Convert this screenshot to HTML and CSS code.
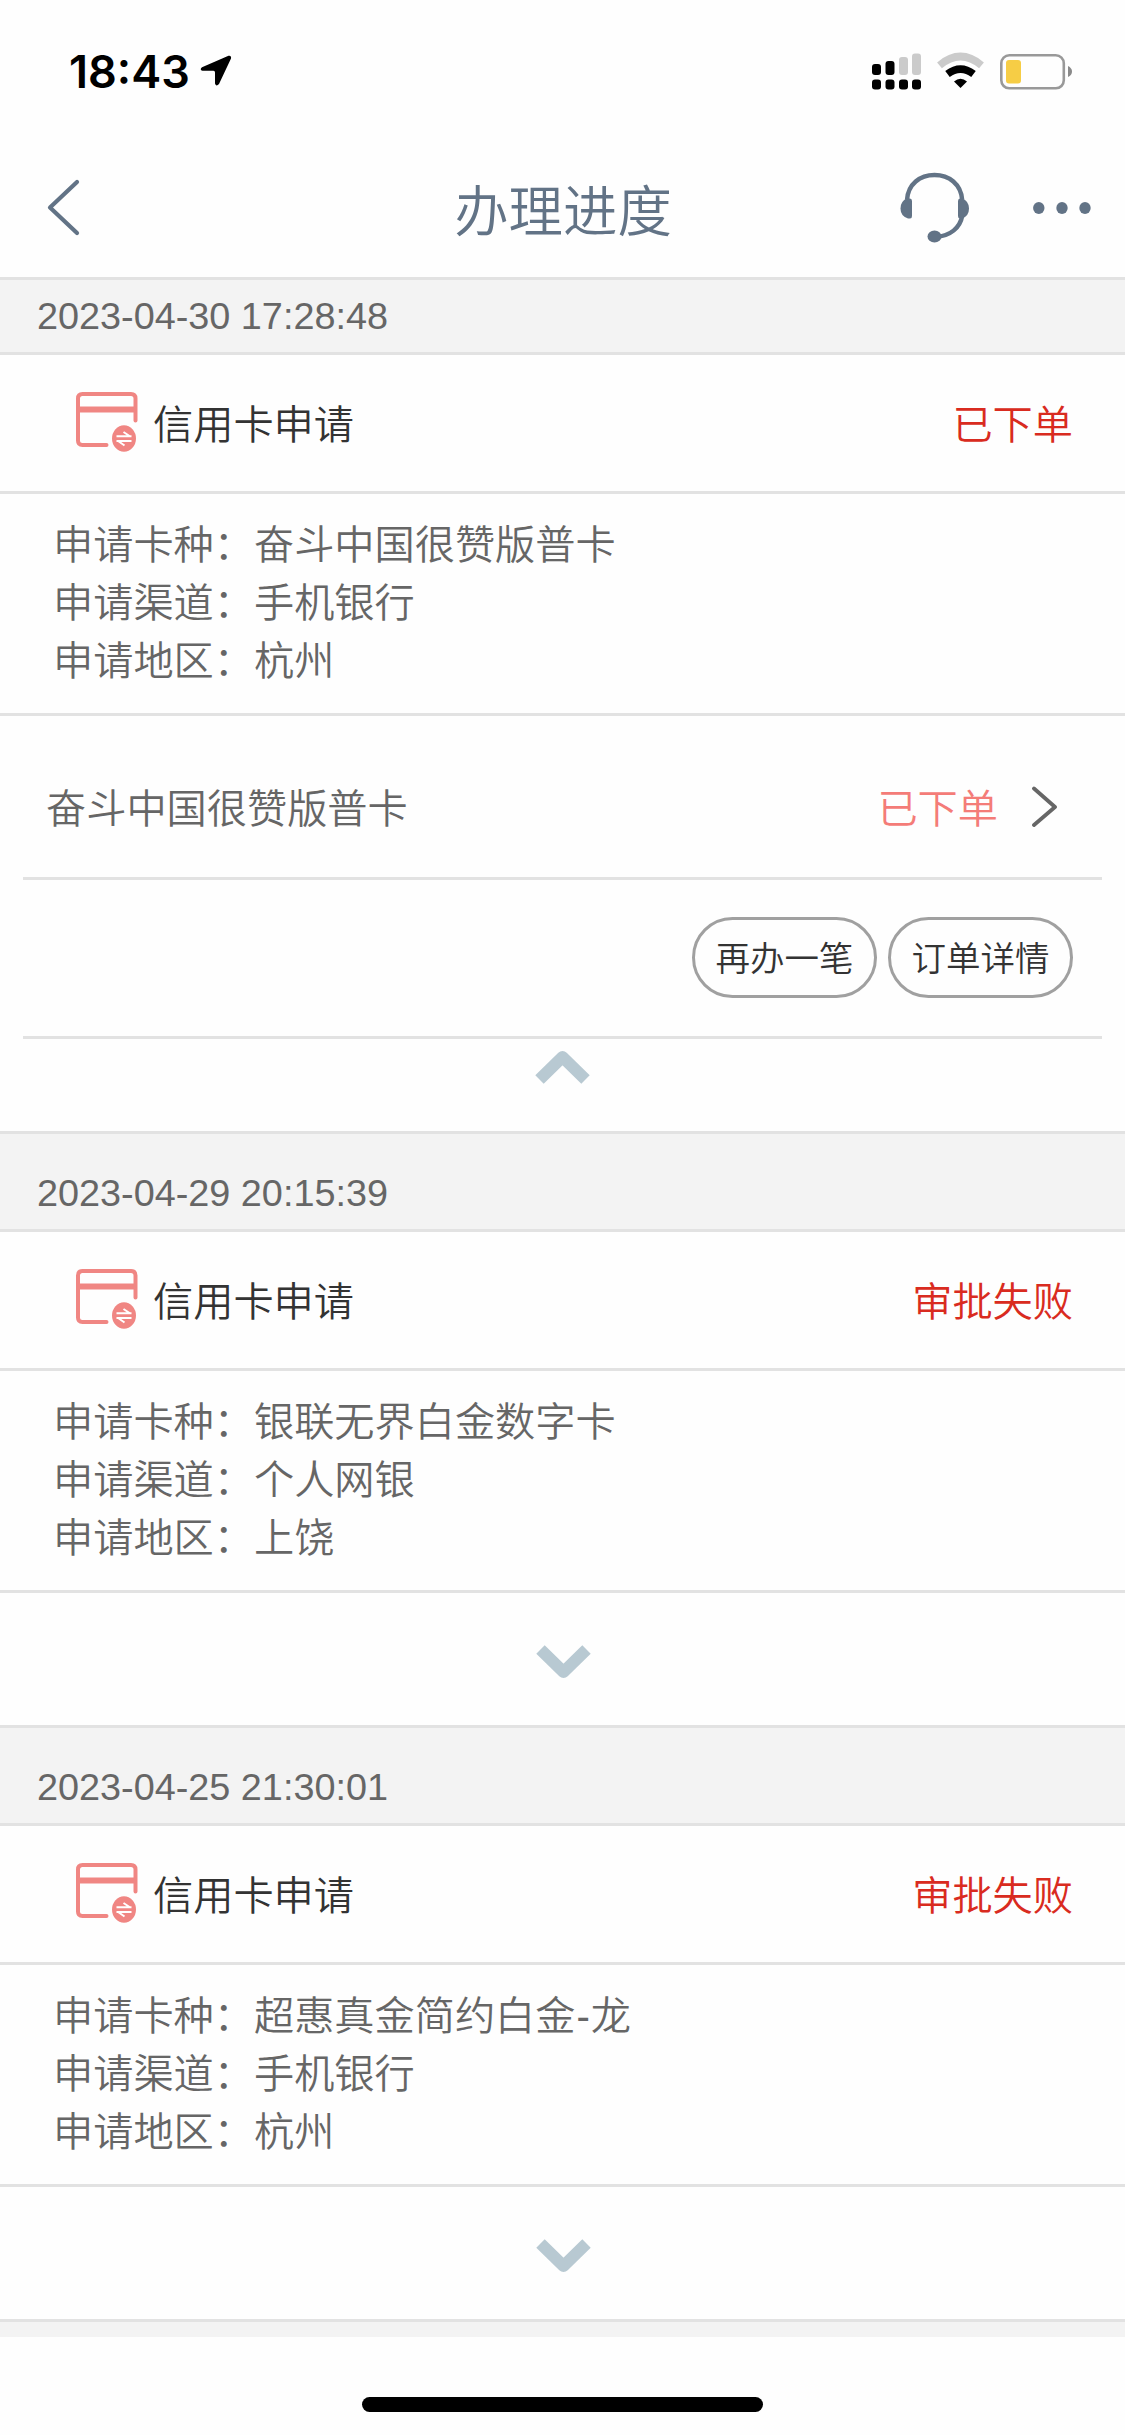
FILE: index.html
```html
<!DOCTYPE html>
<html lang="zh-CN">
<head>
<meta charset="utf-8">
<title>办理进度</title>
<link rel="stylesheet" href="styles.css">
</head>
<body>
<svg class="defs" width="0" height="0" aria-hidden="true">
  <symbol id="card" viewBox="0 0 64 64">
    <g fill="none" stroke="#f08683" stroke-width="4" stroke-linecap="round">
      <path d="M60.500 30.500V8.500Q60.500 4 56 4H7.500Q3 4 3 8.500V50.500Q3 55 7.500 55H31.500"/>
    </g>
    <path d="M3 16.500H61V22.500H3Z" fill="#f08683"/>
    <ellipse cx="49" cy="48.500" rx="12" ry="13.200" fill="#f08683"/>
    <path d="M41.500 46.300H56.500M48.500 42L54.500 46M41.500 51H56.500M43.500 51.300L49.500 55.500" fill="none" stroke="#fff" stroke-width="2"/>
  </symbol>
  <symbol id="fold" viewBox="0 0 56 36">
    <path d="M4.500 29.500L27.500 7L50.500 29.500" fill="none" stroke="#b8c9d2" stroke-width="12" stroke-linejoin="round"/>
  </symbol>
</svg>

<header class="status-bar">
  <div class="clock">
    <span class="time">18:43</span>
    <svg class="location" width="32" height="32" viewBox="0 0 32 32"><path d="M28.500 .8L2 12.200Q-.8 14.800 2.500 15.800H13.500Q15 15.800 15 17.400V28.500Q16.200 32 19 29L31 3.500Q31.500 0 28.500 .8Z"/></svg>
  </div>
  <svg class="indicators" width="202" height="40" viewBox="0 0 202 40">
    <rect x="0" y="12" width="9" height="11" rx="3"/>
    <rect x="13.500" y="9" width="9" height="14" rx="3"/>
    <rect x="27" y="5" width="9" height="18" rx="3" fill="#cbcbcb"/>
    <rect x="40" y="1.500" width="9" height="21.500" rx="3" fill="#cbcbcb"/>
    <rect x="0" y="27.500" width="9" height="10" rx="3"/>
    <rect x="13.500" y="27.500" width="9" height="10" rx="3"/>
    <rect x="27" y="27.500" width="9" height="10" rx="3"/>
    <rect x="40" y="27.500" width="9" height="10" rx="3"/>
    <g fill="none">
      <path d="M67.500 13.300Q88.500 -4.300 109.500 13.300" stroke="#cbcbcb" stroke-width="7.500"/>
      <path d="M75.500 22Q88.500 12.200 101.500 22" stroke="#000" stroke-width="7.500"/>
    </g>
    <path d="M82 29.500Q88.500 24 95 29.500L88.500 36Z"/>
    <rect x="129.300" y="3.300" width="62.500" height="33" rx="8" fill="none" stroke="#999" stroke-width="2.600"/>
    <rect x="134" y="8" width="15" height="23.500" rx="3" fill="#f6cd45"/>
    <path d="M196 14Q200 16 200 19.500Q200 23 196 25Z" fill="#8a8a8a"/>
  </svg>
</header>

<nav class="nav-bar">
  <svg class="back" width="34" height="58" viewBox="0 0 34 58"><path d="M30 4L3 29.500L30 55" fill="none" stroke="#627386" stroke-width="4.200" stroke-linecap="round" stroke-linejoin="round"/></svg>
  <h1 class="title">办理进度</h1>
  <div class="actions">
    <svg class="headset" width="70" height="74" viewBox="0 0 70 74">
      <g fill="none" stroke="#627386" stroke-width="4.400"><path d="M7 29C8 13 20 4 34.500 4S61 13 62.200 29M62.200 45C60 57 50 65 36 66"/></g>
      <g fill="#627386"><path d="M9 27.500H10Q12 27.500 12 30V45Q12 47.500 10 47.500H8Q.5 45 .5 37.500T7 27.500Z"/><path d="M60 27.500H62Q69 30 69 37.500T62 47.500H60Q58 47.500 58 45V30Q58 27.500 60 27.500Z"/><ellipse cx="34.500" cy="65.500" rx="7" ry="6"/></g>
    </svg>
    <svg width="58" height="14" viewBox="0 0 58 14" fill="#627386"><ellipse cx="5.800" cy="7" rx="5.700" ry="6.100"/><ellipse cx="29" cy="7" rx="5.700" ry="6.100"/><ellipse cx="52" cy="7" rx="5.700" ry="6.100"/></svg>
  </div>
</nav>

<main class="list">
  <section class="record first">
    <div class="date">2023-04-30 17:28:48</div>
    <div class="summary">
      <svg class="card-icon" width="64" height="64"><use href="#card"/></svg>
      <span class="name">信用卡申请</span>
      <span class="state">已下单</span>
    </div>
    <div class="details">
      <p>申请卡种：奋斗中国很赞版普卡</p>
      <p>申请渠道：手机银行</p>
      <p>申请地区：杭州</p>
    </div>
    <div class="order">
      <div class="order-row">
        <span class="order-name">奋斗中国很赞版普卡</span>
        <span class="order-state">已下单</span>
        <svg width="28" height="42" viewBox="0 0 28 42"><path d="M4 3.500L25 22L4 40" fill="none" stroke="#666" stroke-width="3.800" stroke-linecap="round" stroke-linejoin="round"/></svg>
      </div>
      <div class="buttons">
        <button class="pill">再办一笔</button>
        <button class="pill">订单详情</button>
      </div>
    </div>
    <div class="toggle open"><svg width="56" height="36"><use href="#fold"/></svg></div>
  </section>

  <section class="record">
    <div class="date">2023-04-29 20:15:39</div>
    <div class="summary">
      <svg class="card-icon" width="64" height="64"><use href="#card"/></svg>
      <span class="name">信用卡申请</span>
      <span class="state">审批失败</span>
    </div>
    <div class="details">
      <p>申请卡种：银联无界白金数字卡</p>
      <p>申请渠道：个人网银</p>
      <p>申请地区：上饶</p>
    </div>
    <div class="toggle"><svg class="down" width="56" height="36"><use href="#fold"/></svg></div>
  </section>

  <section class="record">
    <div class="date">2023-04-25 21:30:01</div>
    <div class="summary">
      <svg class="card-icon" width="64" height="64"><use href="#card"/></svg>
      <span class="name">信用卡申请</span>
      <span class="state">审批失败</span>
    </div>
    <div class="details">
      <p>申请卡种：超惠真金简约白金<span class="dash">-</span>龙</p>
      <p>申请渠道：手机银行</p>
      <p>申请地区：杭州</p>
    </div>
    <div class="toggle"><svg class="down" width="56" height="36"><use href="#fold"/></svg></div>
  </section>
  <div class="next-record"></div>
</main>

<footer class="home-area"><div class="home-indicator"></div></footer>
</body>
</html>
```
FILE: styles.css
```css
* { box-sizing: border-box; }

body {
  margin: 0;
  width: 1125px;
  height: 2435px;
  overflow: hidden;
  background: #fefefe;
  color: #666;
  font-family: "Liberation Sans", "Noto Sans CJK SC DemiLight", "Noto Sans CJK SC", sans-serif;
  font-size: 40.200px;
  font-weight: 350;
}

.defs { display: block; height: 0; }
svg { display: block; flex: none; }

.status-bar {
  height: 144px;
  display: flex;
  justify-content: space-between;
  align-items: flex-start;
  padding: 52px 51px 0 69px;
}
.clock { display: flex; gap: 11px; color: #000; }
.time {
  width: 120px;
  font: 600 45px/40px Inter, sans-serif;
  white-space: nowrap;
}
.location { margin-top: 3px; }

.nav-bar {
  height: 133px;
  display: grid;
  grid-template-columns: 1fr auto 1fr;
  align-items: start;
  padding: 0 34px 0 47px;
  color: #627386;
}
.back { margin-top: 34px; }
.title {
  margin: 29px 0 0;
  transform: translateX(-6px);
  font-size: 54.400px;
  font-weight: 350;
  line-height: 80px;
}
.actions {
  display: flex;
  justify-content: flex-end;
  align-items: center;
  gap: 63px;
  margin-top: 27px;
}

.date {
  height: 101px;
  padding: 37px 0 0 37px;
  border-top: 3px solid #e2e2e2;
  border-bottom: 3px solid #e2e2e2;
  background: #f3f3f3;
  font-size: 37.800px;
  line-height: 44px;
}
.first .date { height: 78px; padding-top: 14px; }

.summary {
  height: 139px;
  display: flex;
  align-items: center;
  padding: 0 52px 4px 75px;
  border-bottom: 3px solid #e2e2e2;
}
.name { margin-left: 14px; color: #333; }
.state { margin-left: auto; color: #d92b20; }
.card-icon { align-self: flex-start; margin-top: 35px; }

.details {
  height: 222px;
  padding: 23px 0 0 53px;
  border-bottom: 3px solid #e2e2e2;
}
.details p { margin: 0; line-height: 58px; }
.dash { margin: 0 1px; }

.order { padding: 0 23px; }
.order-row {
  height: 164px;
  display: flex;
  align-items: center;
  padding: 18px 44px 0 23px;
  border-bottom: 3px solid #e2e2e2;
}
.order-state { margin: 0 32px 0 auto; color: #f47c78; }
.buttons {
  height: 159px;
  display: flex;
  justify-content: flex-end;
  gap: 11px;
  padding: 37px 29px 0 0;
  border-bottom: 3px solid #e2e2e2;
}
.pill {
  width: 185px;
  height: 81px;
  padding: 0 0 4px;
  border: 3px solid #a0a0a0;
  border-radius: 41px;
  background: transparent;
  color: #333;
  font: inherit;
  font-size: 34.500px;
}

.toggle {
  height: 132px;
  display: flex;
  justify-content: center;
  padding-top: 50px;
}
.toggle.open { height: 92px; padding-top: 11px; }
.down { transform: rotate(180deg); }

.next-record {
  height: 18px;
  border-top: 3px solid #e2e2e2;
  background: #f3f3f3;
}

.home-area { padding-top: 60px; }
.home-indicator {
  width: 401px;
  height: 15px;
  margin: 0 auto;
  border-radius: 8px;
  background: #000;
}
```
